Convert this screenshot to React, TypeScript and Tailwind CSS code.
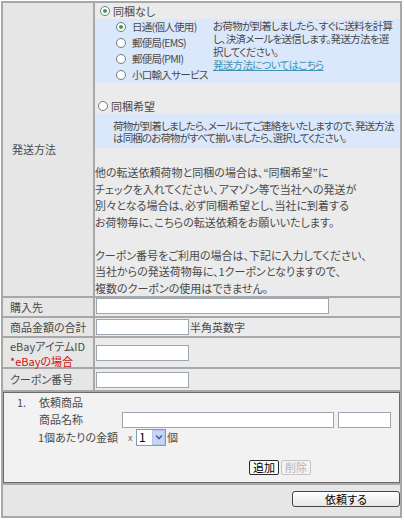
import { useState } from 'react';

const Radio = ({ checked }: { checked?: boolean }) => (
  <span className="inline-flex items-center justify-center w-[10px] h-[10px] rounded-full border border-[#6c7a86] bg-white shrink-0">
    {checked && <span className="w-[4px] h-[4px] rounded-full bg-[#3fa13f]" />}
  </span>
);

const Field = ({ width }: { width: string }) => (
  <input type="text" className={`${width} h-[16px] bg-white border border-[#9ba6b1] outline-none`} />
);

const shipOptions = ['日通(個人使用)', '郵便局(EMS)', '郵便局(PMI)', '小口輸入サービス'];

const App = () => {
  const [bundle, setBundle] = useState('none');
  const [ship, setShip] = useState(0);

  return (
    <div className="w-[405px] h-[520px] bg-white pt-[1px] pl-[1px] font-['Noto_Sans_CJK_JP',sans-serif] text-[11px] leading-none text-[#4a4a4a] [font-feature-settings:'palt']">
      <div className="w-[401px] grid grid-cols-[90px_305px] gap-[2px] p-[2px] bg-[#a8a8a8]">
        {/* 発送方法 */}
        <div className="bg-[#e6e6e6] flex items-center pl-[9px]">発送方法</div>
        <div className="bg-[#ebebeb] h-[293px] overflow-hidden">
          <div className="h-[16px] flex items-center gap-[3px] pl-[5px]" onClick={() => setBundle('none')}>
            <Radio checked={bundle === 'none'} />
            同梱なし
          </div>
          <div className="h-[64px] bg-[#dbe8fb] flex text-[10.5px] tracking-[-0.7px]">
            <div className="w-[118px] pl-[21px]">
              {shipOptions.map((label, i) => (
                <div key={label} className="h-[16px] flex items-center gap-[6px]" onClick={() => setShip(i)}>
                  <Radio checked={ship === i} />
                  <span className="whitespace-nowrap">{label}</span>
                </div>
              ))}
            </div>
            <div className="flex-1 leading-[13px] whitespace-nowrap">
              お荷物が到着しましたら、すぐに送料を計算
              <br />
              し、決済メールを送信します。発送方法を選
              <br />
              択してください。
              <br />
              <a href="#" className="text-[#3f94b5] underline">発送方法についてはこちら</a>
            </div>
          </div>
          <div className="h-[16px]" />
          <div className="h-[14px] flex items-center gap-[3px] pl-[3px]" onClick={() => setBundle('want')}>
            <Radio checked={bundle === 'want'} />
            同梱希望
          </div>
          <div className="h-[35px] bg-[#dbe8fb] pl-[18px] pt-[7px] leading-[12px] whitespace-nowrap text-[10.5px] tracking-[-0.85px]">
            荷物が到着しましたら、メールにてご連絡をいたしますので、発送方法
            <br />
            は同梱のお荷物がすべて揃いましたら、選択してください。
          </div>
          <div className="pt-[16px] leading-[16.5px] whitespace-nowrap">
            <p>他の転送依頼荷物と同梱の場合は、“同梱希望”に</p>
            <p>チェックを入れてください、アマゾン等で当社への発送が</p>
            <p>別々となる場合は、必ず同梱希望とし、当社に到着する</p>
            <p>お荷物毎に、こちらの転送依頼をお願いいたします。</p>
            <p>&nbsp;</p>
            <p>クーポン番号をご利用の場合は、下記に入力してください、</p>
            <p>当社からの発送荷物毎に、1クーポンとなりますので、</p>
            <p>複数のクーポンの使用はできません。</p>
          </div>
        </div>

        {/* 購入先 */}
        <div className="bg-[#e6e6e6] h-[18px] flex items-center pl-[7px]">購入先</div>
        <div className="bg-[#ebebeb] pl-[1px]">
          <Field width="w-[233px]" />
        </div>

        {/* 商品金額の合計 */}
        <div className="bg-[#e6e6e6] h-[18px] flex items-center pl-[7px]">商品金額の合計</div>
        <div className="bg-[#ebebeb] pl-[1px] flex items-center">
          <Field width="w-[93px]" />
          <span className="ml-[1px]">半角英数字</span>
        </div>

        {/* eBay */}
        <div className="bg-[#e6e6e6] h-[29px] pl-[7px] leading-[16px]">
          <p>eBayアイテムID</p>
          <p className="text-[#d01010] -mt-[1px]">*eBayの場合</p>
        </div>
        <div className="bg-[#ebebeb] pl-[1px] pt-[7px]">
          <Field width="w-[93px]" />
        </div>

        {/* クーポン番号 */}
        <div className="bg-[#e6e6e6] h-[21px] flex items-center pl-[7px]">クーポン番号</div>
        <div className="bg-[#ebebeb] pl-[1px] pt-[3px]">
          <Field width="w-[93px]" />
        </div>

        {/* 依頼商品 */}
        <div className="col-span-2 h-[91px] border border-[#6b6b6b] bg-[#f2f2f2] pt-[1px]">
          <div className="h-[16px] flex items-center">
            <span className="w-[35px] pl-[13px]">1.</span>
            <span>依頼商品</span>
          </div>
          <div className="h-[17px] mt-[1px] flex items-center pl-[35px]">
            <span className="w-[83px]">商品名称</span>
            <Field width="w-[212px]" />
            <span className="w-[4px]" />
            <Field width="w-[53px]" />
          </div>
          <div className="h-[18px] flex items-center pl-[34px]">
            <span className="w-[90px] whitespace-nowrap">1個あたりの金額</span>
            <span className="w-[8px] text-[9px] text-[#666]">x</span>
            <div className="w-[30px] h-[17px] bg-white border border-[#7f9db9] flex items-center">
              <span className="flex-1 pl-[2px] text-[12px] text-black">1</span>
              <span className="w-[13px] h-[15px] bg-[#c6d6f7] border border-[#b3c6ef] flex items-center justify-center">
                <svg width="8" height="6" viewBox="0 0 8 6">
                  <path d="M1 1.5 L4 4.5 L7 1.5" fill="none" stroke="#4d6185" strokeWidth="1.6" />
                </svg>
              </span>
            </div>
            <span className="ml-[1px]">個</span>
          </div>
          <div className="mt-[14px] flex gap-[2px] pl-[245px]">
            <button className="w-[30px] h-[15px] rounded-[2px] border border-[#2a2a2a] bg-[#fafafa] text-black text-[11px] leading-none">追加</button>
            <button className="w-[30px] h-[15px] rounded-[2px] border border-[#c4c4c4] bg-[#f4f4f4] text-[#b5b5b5] text-[11px] leading-none">削除</button>
          </div>
        </div>

        {/* 送信 */}
        <div className="col-span-2 h-[31px] bg-[#e6e6e6] flex justify-end items-start pt-[6px]">
          <button className="w-[108px] h-[16px] rounded-[3px] border border-[#444] bg-gradient-to-b from-white to-[#e6e6e6] text-black text-[11px] leading-none">
            依頼する
          </button>
        </div>
      </div>
    </div>
  );
};

export default App;
